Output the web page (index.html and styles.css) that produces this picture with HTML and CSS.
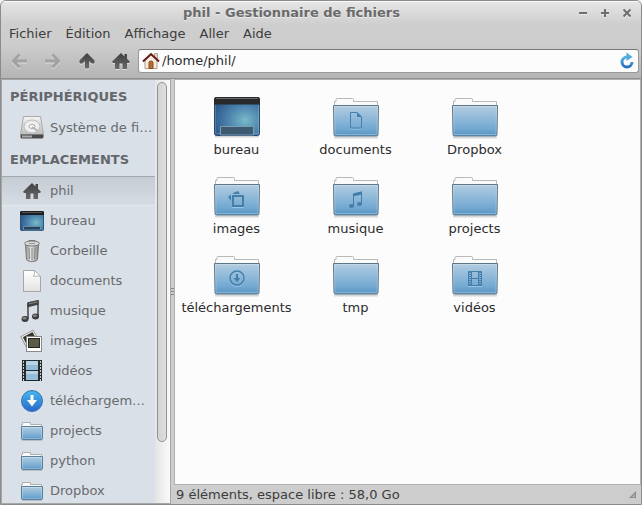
FILE: index.html
```html
<!DOCTYPE html>
<html lang="fr">
<head>
<meta charset="utf-8">
<meta name="viewport" content="width=device-width, initial-scale=1">
<title>phil - Gestionnaire de fichiers</title>
<link rel="stylesheet" href="styles.css">
</head>
<body>
<svg class="defs" width="0" height="0" aria-hidden="true">
  <defs>
    <linearGradient id="g-blue" x1="0" y1="0" x2="0" y2="1"><stop offset="0" stop-color="#b3cde1"/><stop offset=".75" stop-color="#73a9d2"/><stop offset="1" stop-color="#5793c2"/></linearGradient>
    <linearGradient id="g-dark" x1="0" y1="0" x2="0" y2="1"><stop offset="0" stop-color="#3f3f3f"/><stop offset="1" stop-color="#696969"/></linearGradient>
    <radialGradient id="g-desk" cx=".68" cy=".6" r=".75"><stop offset="0" stop-color="#78bac8"/><stop offset=".5" stop-color="#4c83ad"/><stop offset="1" stop-color="#2a5687"/></radialGradient>
    <linearGradient id="g-metal" x1="0" y1="0" x2="1" y2="0"><stop offset="0" stop-color="#8c8c8c"/><stop offset=".4" stop-color="#e6e6e6"/><stop offset="1" stop-color="#888"/></linearGradient>
    <linearGradient id="g-disk" x1="0" y1="0" x2="0" y2="1"><stop offset="0" stop-color="#f4f4f4"/><stop offset="1" stop-color="#bdbdbd"/></linearGradient>
    <linearGradient id="g-down" x1="0" y1="0" x2="0" y2="1"><stop offset="0" stop-color="#45b8f0"/><stop offset="1" stop-color="#2a67c9"/></linearGradient>
    <linearGradient id="g-page" x1="0" y1="0" x2="0" y2="1"><stop offset="0" stop-color="#fff"/><stop offset="1" stop-color="#e2e2e2"/></linearGradient>
    <linearGradient id="g-reload" x1="0" y1="0" x2="0" y2="1"><stop offset="0" stop-color="#58b4e6"/><stop offset="1" stop-color="#2a6fc0"/></linearGradient>
  </defs>
  <symbol id="folder" viewBox="0 0 48 42">
    <path d="M2 40.500H46" stroke="#000" stroke-opacity=".15" stroke-width="2"/>
    <path d="M2.500 10V4.500H4V2.500q0-1 1-1H20.500q1 0 1 1V4.500H45.500V10" fill="#fafafa" stroke="#b9b9b9"/>
    <path d="M1.500 8.500H46.500L46 37.500q0 1.500-1.500 1.500H3.500Q2 39 2 37.500Z" fill="url(#g-blue)" stroke="#5c7689"/>
    <path d="M2.500 9.500H45.500L45 37.500H3Z" fill="none" stroke="#fff" stroke-opacity=".25"/>
  </symbol>
  <symbol id="folder-s" viewBox="0 0 24 20">
    <path d="M2 19.500H22" stroke="#000" stroke-opacity=".15"/>
    <path d="M1.500 6V3.500H2.500V1.500H10.500V3.500H21.500V6" fill="#fafafa" stroke="#adb1b4"/>
    <path d="M1.500 5.500H22.500V17.500q0 1-1 1H2.500q-1 0-1-1Z" fill="url(#g-blue)" stroke="#5c7f99"/>
    <path d="M2.500 6.500H21.500V17.500H2.500Z" fill="none" stroke="#fff" stroke-opacity=".25"/>
  </symbol>
  <symbol id="desktop" viewBox="0 0 48 42">
    <path d="M2 39.500H46" stroke="#000" stroke-opacity=".15" stroke-width="2"/>
    <rect x="1.500" y=".5" width="45" height="38" rx="2" fill="url(#g-desk)" stroke="#27496e"/>
    <path d="M1 7.500V2.500Q1 0 3.500 0H44.500Q47 0 47 2.500V7.500Z" fill="#282a2b"/>
    <path d="M3 1.500H45" stroke="#686a6a"/>
    <path d="M2.500 8V36.500H45.500V8" fill="none" stroke="#fff" stroke-opacity=".18"/>
    <path d="M7.500 38V29.500H40.500V38Z" fill="#3d5a70" stroke="#7b9db4"/>
  </symbol>
  <symbol id="desktop-s" viewBox="0 0 24 20">
    <rect x=".5" y=".5" width="23" height="19" rx="1" fill="url(#g-desk)" stroke="#29517c"/>
    <path d="M0 4V1.500Q0 0 1.500 0H22.500Q24 0 24 1.500V4Z" fill="#1c1d1d"/>
    <path d="M2 1.500H22" stroke="#555"/>
    <path d="M3.500 19V15.500H20.500V19Z" fill="#2b4359" stroke="#618dab"/>
  </symbol>
  <symbol id="home" viewBox="0 0 18 18">
    <path d="M9 1L0 9.700L1 11H3V17H7.500V11.500H10.500V17H15V11H17L18 9.700L15 6.800V2H12.500V4.400Z" fill="url(#g-dark)"/>
  </symbol>
  <symbol id="arrow" viewBox="0 0 18 18">
    <path d="M2 8.500L9 1.500L16 8.500V11H13.500L10.500 8V16H7.500V8L4.500 11H2Z" fill="url(#g-dark)" stroke="url(#g-dark)" stroke-width="1" stroke-linejoin="round"/>
  </symbol>
  <symbol id="back" viewBox="0 0 18 18">
    <path d="M9.500 2.500L3.500 9L9.500 15.500M4 9H17" fill="none" stroke="#a2a2a2" stroke-width="3"/>
  </symbol>
  <symbol id="note" viewBox="0 0 24 24">
    <path d="M8 4L18 2V17M8 20V4" fill="none" stroke="#444" stroke-width="1.500"/>
    <path d="M7.300 3.500L18.700 1V5.500L7.300 8.500Z" fill="#424242"/><path d="M9 4.800L17.500 2.900" stroke="#8a8a8a"/>
    <ellipse cx="5" cy="20" rx="3.500" ry="3" fill="#3c3c3c"/><ellipse cx="15.500" cy="17.500" rx="3.500" ry="3" fill="#3c3c3c"/>
    <ellipse cx="4.500" cy="19.200" rx="2" ry="1.200" fill="#888"/><ellipse cx="15" cy="16.700" rx="2" ry="1.200" fill="#888"/>
  </symbol>
</svg>

<div class="window">
  <header class="header">
    <div class="titlebar">
      <h1 class="title">phil - Gestionnaire de fichiers</h1>
      <div class="controls">
        <button class="control" type="button" aria-label="Réduire"><svg width="10" height="10"><path d="M1 5H9" stroke="#6e6e6e" stroke-width="2"/></svg></button>
        <button class="control" type="button" aria-label="Agrandir"><svg width="10" height="10"><path d="M1 5H9M5 1V9" stroke="#6e6e6e" stroke-width="2"/></svg></button>
        <button class="control" type="button" aria-label="Fermer"><svg width="10" height="10"><path d="M1.500 1.500L8.500 8.500M8.500 1.500L1.500 8.500" stroke="#6e6e6e" stroke-width="2"/></svg></button>
      </div>
    </div>
    <nav class="menubar">
      <button class="menu" type="button">Fichier</button>
      <button class="menu" type="button">Édition</button>
      <button class="menu" type="button">Affichage</button>
      <button class="menu" type="button">Aller</button>
      <button class="menu" type="button">Aide</button>
    </nav>
    <div class="toolbar">
      <button class="tool" type="button" aria-label="Précédent" disabled><svg width="18" height="18"><use href="#back"/></svg></button>
      <button class="tool forward" type="button" aria-label="Suivant" disabled><svg width="18" height="18"><use href="#back"/></svg></button>
      <button class="tool" type="button" aria-label="Dossier parent"><svg width="18" height="18"><use href="#arrow"/></svg></button>
      <button class="tool" type="button" aria-label="Dossier personnel"><svg width="18" height="18"><use href="#home"/></svg></button>
      <div class="location">
        <svg width="18" height="18" viewBox="0 0 18 18" aria-hidden="true">
          <path d="M12.500 1.500H15.500V7H12.500Z" fill="#ddd0c5" stroke="#b7a596"/>
          <path d="M3 8L9 3L15 8V16.500H3Z" fill="#f5ebe2" stroke="#b49a87"/>
          <path d="M7 16.500V10.500Q7 9 9 9T11 10.500V16.500Z" fill="#b56d2f" stroke="#8c4d20"/>
          <path d="M1 9.500L9 2L17 9.500" fill="none" stroke="#641b1b" stroke-width="2"/>
        </svg>
        <input class="path" type="text" value="/home/phil/" aria-label="Emplacement">
        <button class="reload" type="button" aria-label="Actualiser"><svg width="16" height="18" viewBox="0 0 16 18"><path d="M13 10A5 5 0 1 1 8 5H9" fill="none" stroke="url(#g-reload)" stroke-width="3"/><path d="M7.500 .5L13.500 5L7.500 9Z" fill="#51acd9"/></svg></button>
      </div>
    </div>
  </header>

  <div class="content">
    <aside class="sidebar">
      <nav class="places">
        <h2 class="heading">PÉRIPHÉRIQUES</h2>
        <a class="place" href="#root"><svg width="24" height="24"><path d="M3.500 .5H20.500L23.500 18.500H.5Z" fill="url(#g-disk)" stroke="#a8a8a8"/><ellipse cx="12" cy="10.500" rx="8" ry="6.500" fill="#eee" stroke="#bbb"/><ellipse cx="12" cy="10.500" rx="3" ry="2" fill="#fff" stroke="#aaa"/><path d="M12 11L18 15" stroke="#b5b5b5" stroke-width="2"/><path d="M.5 18.500H23.500V21Q23.500 22.500 22 22.500H2Q.5 22.500 .5 21Z" fill="#4b4b4b"/><path d="M2 20.500H12" stroke="#aaa" stroke-width="2"/></svg><span>Système de fi…</span></a>
        <h2 class="heading">EMPLACEMENTS</h2>
        <a class="place selected" href="#phil" aria-current="page"><svg width="24" height="18"><use href="#home"/></svg><span>phil</span></a>
        <a class="place" href="#bureau"><svg width="24" height="20"><use href="#desktop-s"/></svg><span>bureau</span></a>
        <a class="place" href="#corbeille"><svg width="24" height="24"><path d="M5.500 5H18.500L17.500 20.500Q17 22.500 12 22.500T6.500 20.500Z" fill="url(#g-metal)" stroke="#777"/><path d="M9 8.500L9.500 20M12 9V21M15 8.500L14.500 20" stroke="#858585"/><path d="M9 3V1.500H15V3" fill="none" stroke="#777"/><ellipse cx="12" cy="4.500" rx="7.500" ry="2.500" fill="#d8d8d8" stroke="#777"/><path d="M9 4.500H15" stroke="#999"/></svg><span>Corbeille</span></a>
        <a class="place" href="#documents"><svg width="24" height="24"><path d="M3.500 1.500H14.500L20.500 7.500V22.500H3.500Z" fill="url(#g-page)" stroke="#a7a7a7"/><path d="M14.500 1.500Q15 5 13.500 7.500Q17 6.500 20.500 7.500Z" fill="#fff" stroke="#b5b5b5"/></svg><span>documents</span></a>
        <a class="place" href="#musique"><svg width="24" height="24"><use href="#note"/></svg><span>musique</span></a>
        <a class="place" href="#images"><svg width="24" height="24"><g transform="rotate(-28 10 9)"><rect x="2.500" y="3.500" width="14" height="14" fill="#f4f4f4" stroke="#999"/><rect x="4" y="5" width="11" height="9" fill="#333629"/></g><rect x="6.500" y="7.500" width="15" height="15" fill="#fff" stroke="#888"/><rect x="8.500" y="9.500" width="11" height="9" fill="#5b5b48" stroke="#26261e"/></svg><span>images</span></a>
        <a class="place" href="#videos"><svg width="24" height="24"><path d="M2 1H22V22H2Z" fill="#252a2d"/><path d="M6 2H18V11H6ZM6 12H18V21H6Z" fill="#93bdd9"/><path d="M6 2H18V6H6ZM6 12H18V15H6Z" fill="#b8d4e6"/><path d="M3.500 2V22M20.500 2V22" stroke="#ccc" stroke-width="1" stroke-dasharray="2 1"/></svg><span>vidéos</span></a>
        <a class="place" href="#telechargements"><svg width="24" height="24"><circle cx="12" cy="12" r="10.500" fill="url(#g-down)" stroke="#3475b7"/><path d="M12 6V12" stroke="#fff" stroke-width="3"/><path d="M7 11H17L12 17.500Z" fill="#fff"/></svg><span>téléchargem…</span></a>
        <a class="place" href="#projects"><svg width="24" height="20"><use href="#folder-s"/></svg><span>projects</span></a>
        <a class="place" href="#python"><svg width="24" height="20"><use href="#folder-s"/></svg><span>python</span></a>
        <a class="place" href="#dropbox"><svg width="24" height="20"><use href="#folder-s"/></svg><span>Dropbox</span></a>
      </nav>
      <div class="track"><div class="thumb"></div></div>
    </aside>
    <div class="splitter"><i></i><i></i><i></i></div>
    <div class="pane">
      <main class="files">
        <a class="file" href="#bureau"><svg width="48" height="42"><use href="#desktop"/></svg><span>bureau</span></a>
        <a class="file" href="#documents"><svg width="48" height="42"><use href="#folder"/><g fill="none"><path d="M18.500 16.500H25L29.500 21V32H18.500Z" stroke="#9cc3df"/><path d="M18.500 15.500H25L29.500 20V31H18.500Z" stroke="#447fac"/><path d="M25 15V20H30Z" fill="#447fac"/></g></svg><span>documents</span></a>
        <a class="file" href="#dropbox"><svg width="48" height="42"><use href="#folder"/></svg><span>Dropbox</span></a>
        <a class="file" href="#images"><svg width="48" height="42"><use href="#folder"/><path d="M20 20H30V30H20Z" fill="none" stroke="#447fac" stroke-width="2"/><path d="M19 31.500H31" stroke="#9cc3df"/><path d="M20 17L25 15L27 18H20ZM18 18.500V25L15 21Z" fill="#447fac"/></svg><span>images</span></a>
        <a class="file" href="#musique"><svg width="48" height="42"><use href="#folder"/><path d="M21.500 30V18L29.500 16V28" fill="none" stroke="#447fac"/><path d="M21 17.500L30 15.500V18.500L21 20.500Z" fill="#447fac"/><ellipse cx="19.500" cy="30" rx="2.500" ry="2" fill="#447fac"/><ellipse cx="27.500" cy="28" rx="2.500" ry="2" fill="#447fac"/></svg><span>musique</span></a>
        <a class="file" href="#projects"><svg width="48" height="42"><use href="#folder"/></svg><span>projects</span></a>
        <a class="file" href="#telechargements"><svg width="48" height="42"><use href="#folder"/><g stroke="#447fac" fill="none"><circle cx="24" cy="24" r="7.500" stroke="#9cc3df"/><circle cx="24" cy="23" r="7" stroke-width="1.500"/><path d="M24 19V24" stroke-width="2"/></g><path d="M20.500 23H27.500L24 27Z" fill="#447fac"/></svg><span>téléchargements</span></a>
        <a class="file" href="#tmp"><svg width="48" height="42"><use href="#folder"/></svg><span>tmp</span></a>
        <a class="file" href="#videos"><svg width="48" height="42"><use href="#folder"/><path d="M17.500 16.500H30.500V30.500H17.500ZM20.500 16V31M27.500 16V31M20 23.500H28" fill="none" stroke="#447fac"/><path d="M19 17V31M29 17V31" stroke="#447fac" stroke-width="2" stroke-dasharray="1 1"/><path d="M17 31.500H31" stroke="#9cc3df"/></svg><span>vidéos</span></a>
      </main>
      <footer class="status"><span>9 éléments, espace libre : 58,0 Go</span><svg width="7" height="7" aria-hidden="true"><path d="M7 0V7H0Z" fill="#8d8d8d"/><path d="M6 3V6H3Z" fill="#b4b4b4"/></svg></footer>
    </div>
  </div>
</div>
</body>
</html>
```
FILE: styles.css
```css
* { box-sizing: border-box; }

html { background: #f4f4f4; }

body {
  margin: 0;
  font: 13px/18px "DejaVu Sans", sans-serif;
  color: #3c3c3c;
}

button {
  margin: 0;
  padding: 0;
  border: 0;
  background: none;
  font: inherit;
  color: inherit;
}

svg { display: block; flex: none; }
a { color: inherit; text-decoration: none; }
.defs { position: absolute; }

.window {
  display: flex;
  flex-direction: column;
  height: 100vh;
  border: 1px solid #8b8b8b;
  border-radius: 6px 6px 0 0;
  background: #cdcdcd;
  overflow: hidden;
}

.header {
  border-bottom: 1px solid #8e8e8e;
  background: linear-gradient(#e6e6e6, #cecece 24px, #cdcdcd 44px, #b4b4b4);
  box-shadow: inset 0 1px #fafafa;
}

.titlebar {
  display: flex;
  align-items: center;
  height: 24px;
  padding: 0 9px 0 4px;
}

.title {
  flex: 1;
  margin: 0;
  font-size: 13px;
  line-height: 24px;
  text-align: center;
  color: #6a6a6a;
  text-shadow: 0 1px #ececec;
}

.controls { display: flex; gap: 12px; }
.control { filter: drop-shadow(0 1px #ececec); }

.menubar { display: flex; gap: 14px; height: 18px; padding: 0 8px; }

.toolbar {
  display: flex;
  align-items: center;
  gap: 16px;
  height: 35px;
  padding: 0 2px 0 9px;
}

.tool { filter: drop-shadow(0 1px #dedede); }
.forward { transform: scaleX(-1); }

.location {
  display: flex;
  flex: 1;
  align-items: center;
  height: 24px;
  margin-left: -8px;
  padding: 0 3px;
  border: 1px solid #989898;
  border-top-color: #777;
  border-radius: 3px;
  background: #fcfcfc;
}

.path {
  flex: 1;
  min-width: 0;
  padding: 0 2px;
  border: 0;
  outline: 0;
  background: none;
  font: inherit;
  color: #2c2c2c;
}

.content { display: flex; flex: 1; min-height: 0; }

.sidebar {
  display: flex;
  width: 170px;
  border: 1px solid #a6a6a6;
  background: #dae0e7;
}

.places { flex: 1; min-width: 0; overflow: hidden; }

.heading {
  margin: 0;
  padding: 0 8px;
  font-size: 13px;
  line-height: 33px;
  color: #63666b;
}

.place {
  display: flex;
  align-items: center;
  gap: 6px;
  height: 30px;
  padding-left: 18px;
  color: #686a6e;
}

.place span { white-space: nowrap; }

.selected {
  border-top: 1px solid #a2a8ae;
  border-bottom: 1px solid #e5e9ee;
  background: linear-gradient(#c5ccd4, #d6dce4);
}

.track {
  width: 15px;
  padding: 2px;
  background: linear-gradient(90deg, #e4e4e4, #fafafa);
}

.thumb {
  width: 10px;
  height: 86%;
  border: 1px solid #929292;
  border-radius: 5px;
  background: linear-gradient(90deg, #d3d3d3, #dedede);
}

.splitter {
  display: flex;
  flex-direction: column;
  align-items: center;
  justify-content: center;
  gap: 2px;
  width: 3px;
}

.splitter i { width: 3px; height: 1px; background: #858585; }

.pane { display: flex; flex: 1; flex-direction: column; min-width: 0; }

.files {
  display: grid;
  flex: 1;
  grid-template-columns: repeat(auto-fill, 119px);
  grid-auto-rows: 79px;
  align-content: start;
  min-height: 0;
  padding: 17px 100px 0 2px;
  border: 1px solid #b0b0b0;
  background: #fcfcfc;
  overflow: hidden;
}

.file {
  display: flex;
  flex-direction: column;
  align-items: center;
  gap: 2px;
  color: #2b2b2b;
}

.status {
  display: flex;
  align-items: center;
  justify-content: space-between;
  height: 19px;
  padding: 0 5px 0 2px;
}
```
